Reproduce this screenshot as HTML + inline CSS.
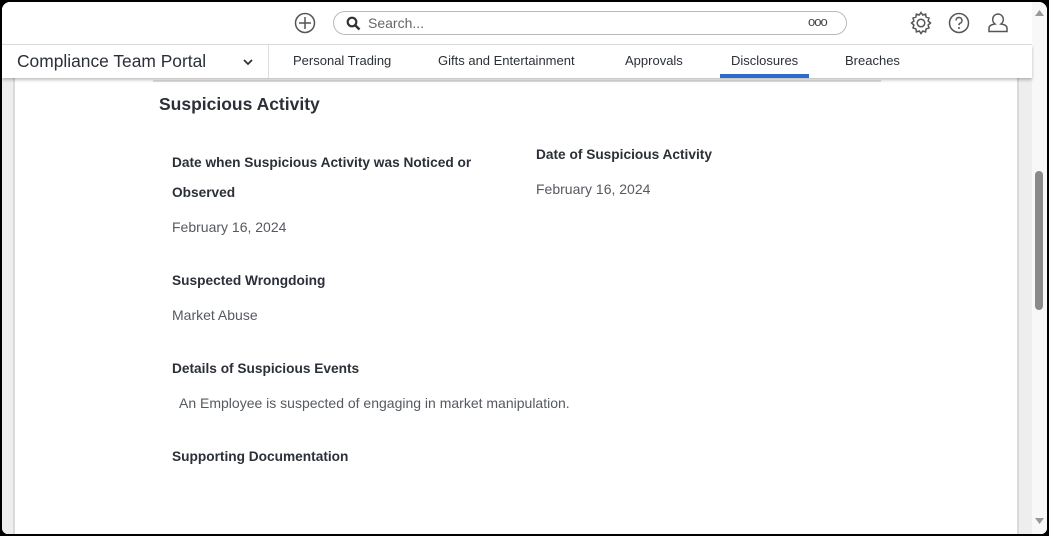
<!DOCTYPE html>
<html><head><meta charset="utf-8"><style>
*{margin:0;padding:0;box-sizing:border-box}
html,body{width:1049px;height:536px;overflow:hidden;background:#000;font-family:"Liberation Sans",sans-serif}
#win{position:absolute;left:2px;top:2px;width:1045px;height:532px;background:#fff;border-radius:8px 8px 6px 6px;overflow:hidden}
.top{position:absolute;left:0;top:0;width:1030px;height:43px;background:#fff;border-bottom:1px solid #dcdcdc}
.nav{position:absolute;left:0;top:43px;width:1030px;height:33px;background:#fff;box-shadow:0 2px 3px rgba(0,0,0,.25);z-index:3}
.lg{position:absolute;left:0;top:76px;width:13px;height:460px;background:#eee;border-right:2px solid #dadada}
.rg{position:absolute;left:1015px;top:76px;width:15px;height:460px;background:#eee;border-left:2px solid #dadada}
.sb{position:absolute;left:1030px;top:0;width:15px;height:532px;background:#f8f8f8}
.thumb{position:absolute;left:3px;top:169px;width:8px;height:139px;background:#8a8a8a;border-radius:4px}
.t{position:absolute;white-space:nowrap}
.lab{position:absolute;font-size:13.7px;font-weight:bold;color:#2b3038;white-space:nowrap}
.val{position:absolute;font-size:14px;color:#555a60;white-space:nowrap}
.tab{position:absolute;top:51px;font-size:13px;color:#2b3038}
</style></head><body><div id="win">
<div class="top">
<svg style="position:absolute;left:292px;top:10px" width="22" height="22" viewBox="0 0 22 22"><circle cx="11" cy="11" r="9.5" fill="none" stroke="#555" stroke-width="1.5"/><path d="M11 5v12M5 11h12" stroke="#555" stroke-width="1.5"/></svg>
<div style="position:absolute;left:331px;top:9px;width:514px;height:24px;border:1px solid #bbb;border-radius:12px"></div>
<svg style="position:absolute;left:344px;top:14px" width="15" height="15" viewBox="0 0 15 15"><circle cx="6" cy="6" r="4.3" fill="none" stroke="#333" stroke-width="2.2"/><path d="M9 9l4.5 4.5" stroke="#333" stroke-width="2.5"/></svg>
<div class="t" style="left:366px;top:13px;font-size:14px;color:#666">Search...</div>
<div class="t" style="left:806px;top:12px;font-size:13px;color:#444;letter-spacing:-1px">ooo</div>
<svg style="position:absolute;left:907px;top:9px" width="24" height="24" viewBox="0 0 24 24"><path d="M12 1.5l1.7 2.5 2.9-.9.5 3 2.9 1-.9 2.9 2.4 2-2.4 2 .9 2.9-2.9 1-.5 3-2.9-.9L12 22.5l-1.7-2.5-2.9.9-.5-3-2.9-1 .9-2.9L2.5 12l2.4-2-.9-2.9 2.9-1 .5-3 2.9.9z" fill="none" stroke="#555" stroke-width="1.5"/><circle cx="12" cy="12" r="3.8" fill="none" stroke="#555" stroke-width="1.5"/></svg>
<svg style="position:absolute;left:946px;top:10px" width="22" height="22" viewBox="0 0 22 22"><circle cx="11" cy="11" r="9.5" fill="none" stroke="#555" stroke-width="1.5"/><path d="M8 8.5a3 3 0 1 1 4 2.8c-.8.4-1 1-1 2" fill="none" stroke="#555" stroke-width="1.5"/><circle cx="11" cy="16" r="1" fill="#555"/></svg>
<svg style="position:absolute;left:985px;top:10px" width="22" height="22" viewBox="0 0 22 22"><path d="M11 2a5.5 5.5 0 0 0-3 10c-3 .5-6 1.5-6 4v3.5h18V16c0-2.5-3-3.5-6-4a5.5 5.5 0 0 0-3-10z" fill="none" stroke="#555" stroke-width="1.5"/></svg>
</div>
<div class="nav">
<div class="t" style="left:15px;top:6px;font-size:17.4px;color:#2b3038">Compliance Team Portal</div>
<svg style="position:absolute;left:241px;top:13px" width="10" height="8" viewBox="0 0 10 8"><path d="M1 2l4 4 4-4" fill="none" stroke="#333" stroke-width="1.8"/></svg>
<div style="position:absolute;left:266px;top:0;width:1px;height:33px;background:#ddd"></div>
<div class="tab" style="left:291px;top:8px">Personal Trading</div>
<div class="tab" style="left:436px;top:8px">Gifts and Entertainment</div>
<div class="tab" style="left:623px;top:8px">Approvals</div>
<div class="tab" style="left:729px;top:8px">Disclosures</div>
<div class="tab" style="left:843px;top:8px">Breaches</div>
<div style="position:absolute;left:718px;top:29px;width:89px;height:4px;background:#2f6bc9"></div>
</div>
<div class="lg"></div><div class="rg"></div>
<div style="position:absolute;left:151px;top:78px;width:728px;height:2px;background:#ddd"></div>
<div class="t" style="left:157px;top:92px;font-size:17.5px;font-weight:bold;color:#2b3038">Suspicious Activity</div>
<div class="lab" style="left:170px;top:153px">Date when Suspicious Activity was Noticed or</div>
<div class="lab" style="left:170px;top:183px">Observed</div>
<div class="val" style="left:170px;top:217px">February 16, 2024</div>
<div class="lab" style="left:534px;top:145px">Date of Suspicious Activity</div>
<div class="val" style="left:534px;top:179px">February 16, 2024</div>
<div class="lab" style="left:170px;top:271px">Suspected Wrongdoing</div>
<div class="val" style="left:170px;top:305px">Market Abuse</div>
<div class="lab" style="left:170px;top:359px">Details of Suspicious Events</div>
<div class="val" style="left:177px;top:393px">An Employee is suspected of engaging in market manipulation.</div>
<div class="lab" style="left:170px;top:447px">Supporting Documentation</div>
<div class="sb"><div class="thumb"></div>
<svg style="position:absolute;left:3px;top:8px" width="9" height="6"><path d="M0 6L4.5 0 9 6z" fill="#999"/></svg>
<svg style="position:absolute;left:3px;top:516px" width="9" height="6"><path d="M0 0L4.5 6 9 0z" fill="#999"/></svg>
</div>
</div></body></html>
